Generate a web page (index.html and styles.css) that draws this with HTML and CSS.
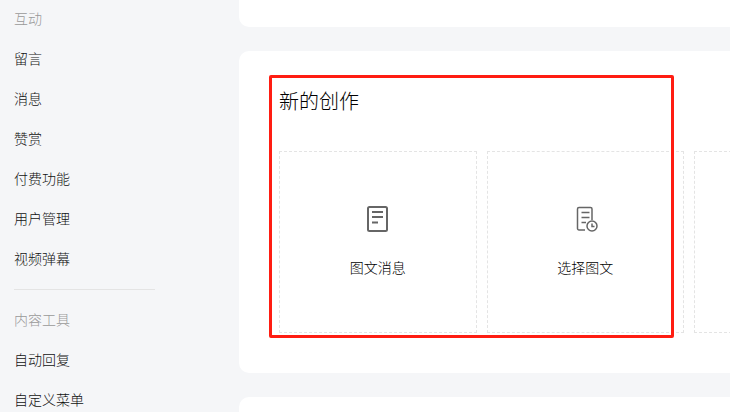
FILE: index.html
```html
<!DOCTYPE html>
<html lang="zh-CN">
<head>
    <meta charset="UTF-8">
    <title>新的创作</title>
    <link rel="stylesheet" href="styles.css">
</head>
<body>
    <aside class="sidebar">
        <div class="menu-title">互动</div>
        <a class="menu-item">留言</a>
        <a class="menu-item">消息</a>
        <a class="menu-item">赞赏</a>
        <a class="menu-item">付费功能</a>
        <a class="menu-item">用户管理</a>
        <a class="menu-item">视频弹幕</a>
        <div class="menu-divider"></div>
        <div class="menu-title">内容工具</div>
        <a class="menu-item">自动回复</a>
        <a class="menu-item">自定义菜单</a>
    </aside>

    <main class="main">
        <section class="card card-top"></section>

        <section class="card card-create">
            <h2 class="create-title">新的创作</h2>
            <div class="tiles">
                <div class="tile">
                    <svg class="tile-icon" width="25" height="28" viewBox="0 0 25 28" fill="none" stroke="#666" stroke-width="2">
                        <rect x="3" y="2" width="19" height="24" rx="1.5"/>
                        <path d="M7 7h11M7 12h11M7 17.500h6"/>
                    </svg>
                    <span class="tile-label">图文消息</span>
                </div>
                <div class="tile">
                    <svg class="tile-icon" width="25" height="28" viewBox="0 0 25 28" fill="none" stroke="#666" stroke-width="1.500">
                        <path d="M12 25H6a1.500 1.500 0 0 1-1.500-1.500V4a1.500 1.500 0 0 1 1.500-1.500h11.500a1.500 1.500 0 0 1 1.500 1.500v11"/>
                        <path d="M8.500 7.500h8M8.500 12.500h8M8.500 17.500h4.500"/>
                        <circle cx="19" cy="21" r="5"/>
                        <path d="M19 18.500v3h2.500"/>
                    </svg>
                    <span class="tile-label">选择图文</span>
                </div>
                <div class="tile"></div>
            </div>
            <div class="highlight"></div>
        </section>

        <section class="card card-bottom"></section>
    </main>
</body>
</html>
```

FILE: styles.css
```css
html, body {
    margin: 0;
    height: 412px;
    overflow: hidden;
}
body {
    display: flex;
    background: #f5f6f8;
    font-family: "Liberation Sans", "Noto Sans CJK SC", sans-serif;
    font-weight: 300;
    color: #333;
}
.sidebar {
    width: 225px;
    height: 412px;
    overflow: hidden;
    flex: none;
    padding-left: 14px;
    font-size: 14px;
}
.menu-title {
    line-height: 39px;
    color: #999;
}
.menu-item {
    display: block;
    line-height: 40px;
    color: #111;
}
.menu-divider {
    width: 141px;
    height: 1px;
    margin: 10px 0 11px;
    background: #e4e4e4;
}
.main {
    flex: 1;
    min-width: 0;
    height: 412px;
    overflow: hidden;
}
.card {
    background: #fff;
    border-radius: 10px 0 0 10px;
    margin-bottom: 24px;
}
.card-top {
    height: 27px;
    border-radius: 0 0 0 10px;
}
.card-create {
    position: relative;
    height: 322px;
    padding-left: 40px;
    box-sizing: border-box;
    overflow: hidden;
}
.card-bottom {
    height: 15px;
    margin-bottom: 0;
    border-radius: 10px 0 0 0;
}
.create-title {
    margin: 0;
    padding-top: 37px;
    font-size: 20px;
    font-weight: 300;
    line-height: 28px;
    color: #000;
}
.tiles {
    display: flex;
    gap: 10px;
    margin-top: 35px;
}
.tile {
    flex: none;
    width: 197.5px;
    height: 182px;
    box-sizing: border-box;
    border: 1px dashed #e4e4e4;
    display: flex;
    flex-direction: column;
    align-items: center;
}
.tile-icon {
    margin-top: 53px;
}
.tile-label {
    margin-top: 25px;
    font-size: 14px;
    line-height: 20px;
    color: #000;
}
.highlight {
    position: absolute;
    left: 30px;
    top: 24px;
    width: 405px;
    height: 263px;
    box-sizing: border-box;
    border: 3px solid #ff1d12;
    border-radius: 2px;
}
```
